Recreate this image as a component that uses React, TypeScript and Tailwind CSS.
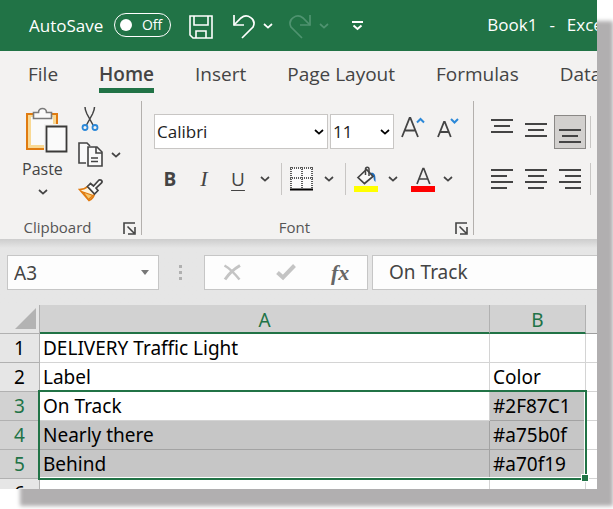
import { useState } from "react";
import type { ReactNode } from "react";

const tabs = ["File", "Home", "Insert", "Page Layout", "Formulas", "Data"];

const rows = [
  { id: 1, a: "DELIVERY Traffic Light", b: "" },
  { id: 2, a: "Label", b: "Color" },
  { id: 3, a: "On Track", b: "#2F87C1" },
  { id: 4, a: "Nearly there", b: "#a75b0f" },
  { id: 5, a: "Behind", b: "#a70f19" },
  { id: 6, a: "", b: "" },
];

function Chevron({ className = "" }: { className?: string }) {
  return (
    <svg className={className} width="10" height="6" viewBox="0 0 10 6" fill="none" stroke="currentColor" strokeWidth="1.700">
      <path d="M1 1l4 3.600L9 1" />
    </svg>
  );
}

function MoreButton({ label }: { label: string }) {
  return (
    <button aria-label={label} className="flex h-8 w-[18px] items-center justify-center">
      <Chevron />
    </button>
  );
}

function ToolButton({ label, children }: { label: string; children: ReactNode }) {
  return (
    <button aria-label={label} className="flex h-8 w-8 shrink-0 items-center justify-center text-[19px] leading-6">
      {children}
    </button>
  );
}

function Divider() {
  return <div className="mr-0.5 ml-[5px] h-8 w-px bg-[#c8c6c4]" />;
}

function GroupLabel({ name }: { name: string }) {
  return (
    <div className="mt-auto flex items-end pr-[5px] text-[15px] leading-4 text-[#555]">
      <span className="flex-1 pr-2 text-center">{name}</span>
      <button aria-label={`${name} settings`}>
        <svg width="13" height="13" viewBox="0 0 13 13" fill="none" stroke="#444" strokeWidth="1.600">
          <path d="M1 12V1h11" />
          <path d="M4.500 4.500l6.500 6.500M12 5v7H5" />
        </svg>
      </button>
    </div>
  );
}

function PasteIcon() {
  return (
    <svg className="self-end" width="42" height="46" viewBox="0 0 42 46" fill="none">
      <path d="M1 7h30v35H1z" fill="#f9d994" />
      <path d="M5 10h22v28H5z" fill="#fafafa" />
      <path d="M31 18V7H1v35h18" stroke="#e07b10" strokeWidth="2" />
      <path d="M7.500 11.500V5.500h5a4 4 0 0 1 8 0h5v6z" fill="#fafafa" stroke="#7a7a7a" strokeWidth="1.600" />
      <path d="M18 17h24v29H18z" fill="#f3f2f1" />
      <path d="M20.500 19.500h20v25h-20z" fill="#fafafa" stroke="#3b3a39" strokeWidth="1.800" />
    </svg>
  );
}

function CutIcon() {
  return (
    <svg width="18" height="24" viewBox="0 0 18 24" fill="none">
      <path d="M4 0c0 3 1 5 2 7l6 11M13.500 0c0 3-1 5-2 7l-6 11" stroke="#444" strokeWidth="1.500" />
      <circle cx="4" cy="20.500" r="2.500" stroke="#2b88d8" strokeWidth="1.800" />
      <circle cx="14" cy="20.500" r="2.500" stroke="#2b88d8" strokeWidth="1.800" />
    </svg>
  );
}

function CopyIcon() {
  return (
    <svg width="25" height="25" viewBox="0 0 25 25" fill="none" stroke="#444" strokeWidth="1.600">
      <path d="M8 21H1V1h8l3 3" fill="#fafafa" />
      <path d="M10 5h9l5 5v14H10z" fill="#fafafa" />
      <path d="M18 5v6h6M13 16h7M13 19.500h7" />
    </svg>
  );
}

function BrushIcon() {
  return (
    <svg width="26" height="24" viewBox="0 0 26 24" fill="none">
      <path d="M1.500 11.500c3.500 0 6-1 8-3l7 7c-.5 3-2.500 5.500-5.500 7z" fill="#fdf3dc" stroke="#e07b10" strokeWidth="1.600" />
      <path d="M5 14l10 3.500-4.500 4z" fill="#f5c76d" stroke="#e07b10" strokeWidth="1.200" />
      <path d="M9.500 8.500l3-3 3 2.500 5-5.500a1.800 1.800 0 0 1 3 2.500l-5.500 5 2 2.500-3.500 3.500z" fill="#fafafa" stroke="#444" strokeWidth="1.700" />
    </svg>
  );
}

function BordersIcon() {
  return (
    <svg width="24" height="24" viewBox="0 0 24 24" fill="none">
      <path d="M1 1h22v20H1z" fill="#fafafa" />
      <path d="M0 1h23M0 11h23M1 0v21M12 0v21M22 0v21" stroke="#333" strokeWidth="2" strokeDasharray="1 1" opacity=".8" />
      <path d="M0 22.500h23" stroke="#000" strokeWidth="2" />
    </svg>
  );
}

function FillIcon() {
  return (
    <svg width="24" height="26" viewBox="0 0 24 26" fill="none">
      <path d="M16 7c4-1 6 1 5.500 9-1.500-1-2-3-2-5z" fill="#1f6fc0" />
      <path d="M4 11.500L12.500 3.500l6.500 7-8.500 7z" fill="#fafafa" stroke="#444" strokeWidth="1.700" />
      <path d="M11.500 9V3c0-2.500 3.500-2.500 3.500 0v7" stroke="#444" strokeWidth="1.500" />
      <path d="M0 20h24v6H0z" fill="#ff0" />
    </svg>
  );
}

function FontColorIcon() {
  return (
    <svg width="24" height="26" viewBox="0 0 24 26" fill="none">
      <path d="M6 18l6-15.500h.8l6 15.500M8 13h9" stroke="#444" strokeWidth="1.700" />
      <path d="M0 20h24v6H0z" fill="red" />
    </svg>
  );
}

function GrowFontIcon() {
  return (
    <svg width="24" height="24" viewBox="0 0 24 24" fill="none">
      <path d="M1 23L8.600 4h.8L17 23M4 16.500h10" stroke="#444" strokeWidth="1.800" />
      <path d="M16 8.500l3.500-3.500L23 8.500" stroke="#2b88d8" strokeWidth="2" />
    </svg>
  );
}

function ShrinkFontIcon() {
  return (
    <svg width="24" height="24" viewBox="0 0 24 24" fill="none">
      <path d="M3 23L9 8h.8l6 15M5.500 18h8" stroke="#444" strokeWidth="1.800" />
      <path d="M16 5L19.500 8.500 23 5" stroke="#2b88d8" strokeWidth="2" />
    </svg>
  );
}

// each line is [x, width], stacked six pixels apart
function Lines({ lines }: { lines: number[][] }) {
  return (
    <svg width="22" height={lines.length * 6 - 4} fill="#444" shapeRendering="crispEdges">
      {lines.map(([x, width], i) => (
        <rect key={i} x={x} y={i * 6} width={width} height="2" />
      ))}
    </svg>
  );
}

function TitleBar() {
  const [autoSave, setAutoSave] = useState(false);

  return (
    <header className="flex h-[51px] items-center bg-[#217346] pl-[29px] text-[17px] whitespace-nowrap text-white">
      <span id="autosave">AutoSave</span>
      <button
        role="switch"
        aria-checked={autoSave}
        aria-labelledby="autosave"
        onClick={() => setAutoSave(!autoSave)}
        className="mb-0.5 ml-[11px] flex h-6 w-[57px] shrink-0 items-center justify-between rounded-full border border-white pr-2 pl-[5px] text-sm"
      >
        <span className="h-3 w-3 rounded-full bg-white" />
        {autoSave ? "On" : "Off"}
      </button>
      <button aria-label="Save" className="ml-[18px] shrink-0 pt-0.5">
        <svg width="24" height="24" viewBox="0 0 24 24" fill="none" stroke="currentColor" strokeWidth="1.600">
          <path d="M1 1h22v22H4l-3-3z" />
          <path d="M5 1v9h14V1M7 23v-7h10v7" />
        </svg>
      </button>
      <button aria-label="Undo" className="ml-5 shrink-0 pt-0.5">
        <svg width="22" height="24" viewBox="0 0 22 24" fill="none" stroke="currentColor" strokeWidth="1.700">
          <path d="M1 0v10h10" />
          <path d="M1 10l7-7c6-5 16 1 12 9L9 23" />
        </svg>
      </button>
      <button aria-label="Undo history" className="ml-2 shrink-0">
        <Chevron />
      </button>
      <button aria-label="Redo" disabled className="ml-4 shrink-0 pt-0.5 text-[#4f9370]">
        <svg width="22" height="24" viewBox="0 0 22 24" fill="none" stroke="currentColor" strokeWidth="1.700">
          <path d="M21 0v10H11" />
          <path d="M21 10l-7-7C8-2-2 4 2 12l11 11" />
        </svg>
      </button>
      <button aria-label="Redo history" disabled className="ml-2 shrink-0 text-[#4f9370]">
        <Chevron />
      </button>
      <button aria-label="Customize toolbar" className="ml-[23px] shrink-0">
        <svg width="11" height="10" viewBox="0 0 11 10" fill="none" stroke="currentColor" strokeWidth="2">
          <path d="M0 1h11M1.500 4.500l4 3.500 4-3.500" />
        </svg>
      </button>
      <h1 className="mb-0.5 ml-[124px] flex gap-3">
        <span>Book1</span>
        <span>-</span>
        <span>Excel</span>
      </h1>
    </header>
  );
}

function Ribbon() {
  const [active, setActive] = useState("Home");

  return (
    <div className="bg-[#f3f2f1] pb-1 text-[#444]">
      <nav className="mb-2 flex gap-[41px] overflow-hidden pl-7">
        {tabs.map((tab) => (
          <button
            key={tab}
            onClick={() => setActive(tab)}
            className={
              tab === active
                ? "h-[42px] border-b-[5px] border-[#217346] pt-2 text-[19px] leading-7 font-semibold whitespace-nowrap"
                : "h-[42px] border-b-[5px] border-transparent pt-2 text-[19px] leading-7 whitespace-nowrap"
            }
          >
            {tab}
          </button>
        ))}
      </nav>

      <div className="flex h-[134px]">
        <section className="flex w-[142px] shrink-0 flex-col border-r border-[#b3b0ad]">
          <div className="flex pt-1.5 pl-[22px]">
            <button className="flex w-[46px] flex-col items-center text-base leading-5">
              <PasteIcon />
              <span className="mt-1.5 self-start">Paste</span>
              <Chevron className="mt-2.5 mr-1" />
            </button>
            <div className="ml-2.5 flex flex-col gap-[11px]">
              <button aria-label="Cut" className="pl-[3px]">
                <CutIcon />
              </button>
              <div className="flex items-center gap-2">
                <button aria-label="Copy">
                  <CopyIcon />
                </button>
                <Chevron />
              </div>
              <button aria-label="Format painter">
                <BrushIcon />
              </button>
            </div>
          </div>
          <GroupLabel name="Clipboard" />
        </section>

        <section className="flex w-[332px] shrink-0 flex-col border-r border-[#b3b0ad]">
          <div className="flex pt-[13px] pl-3">
            <div className="relative">
              <select
                aria-label="Font name"
                className="h-[35px] w-[174px] appearance-none border border-[#c8c6c4] bg-white pl-0.5 text-[17px] text-[#222]"
              >
                <option>Calibri</option>
              </select>
              <Chevron className="pointer-events-none absolute top-[15px] right-1 text-black" />
            </div>
            <div className="relative ml-0.5">
              <select
                aria-label="Font size"
                className="h-[35px] w-16 appearance-none border border-[#c8c6c4] bg-white pl-0.5 text-[17px] text-[#222]"
              >
                <option>11</option>
              </select>
              <Chevron className="pointer-events-none absolute top-[15px] right-1 text-black" />
            </div>
            <button aria-label="Increase font size" className="ml-[7px] self-start">
              <GrowFontIcon />
            </button>
            <button aria-label="Decrease font size" className="ml-2.5 self-start">
              <ShrinkFontIcon />
            </button>
          </div>
          <div className="flex items-center gap-0.5 pt-[14px] pl-3">
            <ToolButton label="Bold">
              <span className="font-bold">B</span>
            </ToolButton>
            <ToolButton label="Italic">
              <span className="font-['Liberation_Serif',serif] text-[22px] italic">I</span>
            </ToolButton>
            <ToolButton label="Underline">
              <span className="underline underline-offset-4">U</span>
            </ToolButton>
            <MoreButton label="Underline styles" />
            <Divider />
            <ToolButton label="Borders">
              <BordersIcon />
            </ToolButton>
            <MoreButton label="Border styles" />
            <Divider />
            <ToolButton label="Fill color">
              <FillIcon />
            </ToolButton>
            <MoreButton label="Fill colors" />
            <div className="ml-[3px] flex items-center">
              <ToolButton label="Font color">
                <FontColorIcon />
              </ToolButton>
              <MoreButton label="Font colors" />
            </div>
          </div>
          <GroupLabel name="Font" />
        </section>

        <section className="flex-1 pl-3">
          <div className="flex items-center gap-0.5 pt-[14px]">
            <button aria-label="Top align" className="flex h-[34px] w-8 shrink-0 items-start justify-center pt-1">
              <Lines lines={[[0, 22], [3, 16], [0, 22]]} />
            </button>
            <button aria-label="Middle align" className="flex h-[34px] w-8 shrink-0 items-start justify-center pt-2">
              <Lines lines={[[0, 22], [3, 16], [0, 22]]} />
            </button>
            <button
              aria-label="Bottom align"
              className="flex h-[34px] w-8 shrink-0 items-end justify-center border border-[#8a8886] bg-[#d2d0ce] pb-[5px]"
            >
              <Lines lines={[[0, 22], [3, 16], [0, 22]]} />
            </button>
            <div className="ml-0.5 h-8 w-px bg-[#c8c6c4]" />
          </div>
          <div className="flex items-center gap-0.5 pt-[14px]">
            <ToolButton label="Align left">
              <Lines lines={[[0, 22], [0, 16], [0, 22], [0, 16]]} />
            </ToolButton>
            <ToolButton label="Center">
              <Lines lines={[[0, 22], [3, 16], [0, 22], [3, 16]]} />
            </ToolButton>
            <ToolButton label="Align right">
              <Lines lines={[[0, 22], [6, 16], [0, 22], [6, 16]]} />
            </ToolButton>
            <div className="ml-0.5 h-8 w-px bg-[#c8c6c4]" />
          </div>
        </section>
      </div>
    </div>
  );
}

function FormulaBar() {
  return (
    <div className="bg-linear-to-b from-[#cdcdcd] to-[#e6e6e6] to-[9px] pt-4 pb-[15px] pl-[7px] font-['Noto_Sans',sans-serif] text-[#444]">
      <div className="flex h-[35px]">
        <div className="relative">
          <input
            aria-label="Name box"
            defaultValue="A3"
            className="h-full w-[152px] border border-[#c6c6c6] bg-[#fdfdfd] pl-1.5 text-[19px]"
          />
          <svg className="absolute top-[15px] right-2.5" width="8" height="5" fill="#777">
            <path d="M0 0h8L4 5z" />
          </svg>
        </div>
        <div className="flex w-[45px] shrink-0 flex-col items-center justify-center gap-[3px] pr-0.5">
          <span className="h-[3px] w-[3px] bg-[#b0b0b0]" />
          <span className="h-[3px] w-[3px] bg-[#b0b0b0]" />
          <span className="h-[3px] w-[3px] bg-[#b0b0b0]" />
        </div>
        <div className="flex w-[164px] shrink-0 items-center justify-around border border-[#c6c6c6] bg-[#fdfdfd]">
          <button aria-label="Cancel">
            <svg width="18" height="17" viewBox="0 0 18 17" fill="none" stroke="#c4c4c4">
              <path d="M1.500 1.500C6 4 12 10 16.500 15.500" strokeWidth="2.500" />
              <path d="M17 1.500C11 5 6 9.500 2 15.500" strokeWidth="3" />
            </svg>
          </button>
          <button aria-label="Enter">
            <svg width="20" height="17" viewBox="0 0 20 17" fill="none" stroke="#c4c4c4" strokeWidth="4">
              <path d="M1.500 8.500l5.500 5L18.500 1.500" />
            </svg>
          </button>
          <button
            aria-label="Insert function"
            className="font-['Liberation_Serif',serif] text-[22px] leading-6 font-bold text-[#666] italic"
          >
            fx
          </button>
        </div>
        <input
          aria-label="Formula bar"
          defaultValue="On Track"
          className="ml-1 min-w-0 flex-1 border-y border-l border-[#c6c6c6] bg-[#fdfdfd] pl-4 text-[19px]"
        />
      </div>
    </div>
  );
}

function Sheet() {
  return (
    <div className="relative h-[184px] overflow-hidden bg-white font-['Noto_Sans',sans-serif] text-[19px] leading-7 text-black">
      <table className="w-full table-fixed border-separate border-spacing-0">
        <colgroup>
          <col className="w-10" />
          <col />
          <col className="w-24" />
          <col className="w-[11px]" />
        </colgroup>
        <thead>
          <tr className="h-[29px] bg-[#e6e6e6] text-[#217346]">
            <td className="border-r border-b border-[#b1b1b1] pb-1 align-bottom">
              <svg className="ml-auto mr-[3px]" width="21" height="21" fill="#b3b3b3">
                <path d="M21 0v21H0z" />
              </svg>
            </td>
            <th className="border-r border-b-2 border-r-[#b1b1b1] border-b-[#217346] bg-[#d2d2d2] pt-1 leading-[23px] font-normal">A</th>
            <th className="border-r border-b-2 border-r-[#b1b1b1] border-b-[#217346] bg-[#d2d2d2] pt-1 leading-[23px] font-normal">B</th>
            <td className="border-b border-[#9f9f9f]" />
          </tr>
        </thead>
        <tbody>
          {rows.map((row) => {
            const selected = row.id >= 3 && row.id <= 5;
            return (
              <tr key={row.id} className="h-[29px]">
                <th
                  className={
                    selected
                      ? "border-r border-b border-[#b1b1b1] bg-[#d2d2d2] font-normal text-[#217346]"
                      : "border-r border-b border-[#b1b1b1] bg-[#e6e6e6] font-normal"
                  }
                >
                  {row.id}
                </th>
                <td
                  className={
                    row.id > 3 && selected
                      ? "border-r border-b border-[#a3a3a3] bg-[#c6c6c6] pl-[3px]"
                      : "border-r border-b border-[#d4d4d4] pl-[3px]"
                  }
                >
                  {row.a}
                </td>
                <td
                  className={
                    selected
                      ? "border-r border-b border-[#a3a3a3] bg-[#c6c6c6] pl-[3px]"
                      : "border-r border-b border-[#d4d4d4] pl-[3px]"
                  }
                >
                  {row.b}
                </td>
                <td className="border-b border-[#d4d4d4]" />
              </tr>
            );
          })}
        </tbody>
      </table>
      {/* selection frame around A3:B5 with its fill handle */}
      <div className="pointer-events-none absolute top-[85px] right-2.5 left-[38px] h-[90px] border-2 border-[#217346]">
        <div className="h-full border-r border-b border-white" />
        <div className="absolute -right-[4px] -bottom-[4px] h-2 w-2 border border-white bg-[#217346]" />
      </div>
    </div>
  );
}

export default function App() {
  return (
    <main className="mr-4 mb-5 font-['Open_Sans',sans-serif] shadow-[18px_19px_4px_-2px_#b1afb0]">
      <div className="overflow-hidden">
        <TitleBar />
        <Ribbon />
        <FormulaBar />
        <Sheet />
      </div>
    </main>
  );
}
